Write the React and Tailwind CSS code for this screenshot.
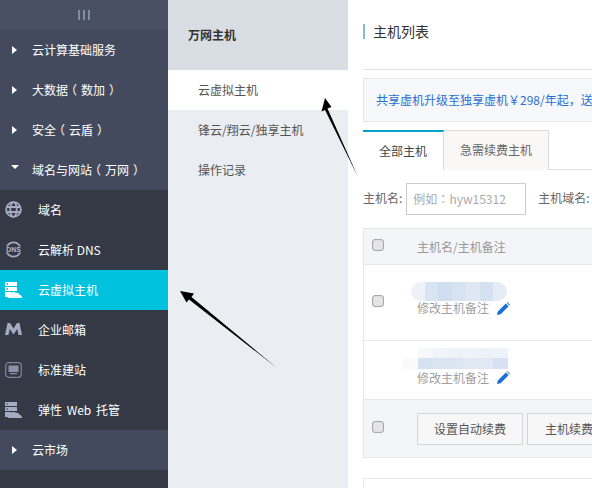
const font = { fontFamily: '"Noto Sans CJK SC","Liberation Sans",sans-serif' };

const Caret = ({ down }) =>
  down ? (
    <svg width="8" height="6" viewBox="0 0 8 6" className="mt-[-6px]"><path d="M0 1h8L4 5z" fill="#fff" /></svg>
  ) : (
    <svg width="5" height="8" viewBox="0 0 5 8" className="ml-[1px]"><path d="M0 0l5 4-5 4z" fill="#fff" /></svg>
  );

const Open = () => <span className="inline-block w-3 -translate-x-[3px]">（</span>;
const Close = () => <span className="inline-block w-3 translate-x-[5px]">）</span>;

const Top = ({ label, inner, down }) => (
  <div className="h-10 flex items-center bg-[#434a5e] text-white text-xs">
    <div className="w-8 pl-[11px] flex items-center"><Caret down={down} /></div>
    <span>{label}{inner && <><Open /><span className="inline-block translate-x-[1px]">{inner}</span><Close /></>}</span>
  </div>
);

const Globe = () => (
  <svg width="17" height="17" viewBox="0 0 17 17" fill="none" stroke="#a3acc0" strokeWidth="1.800" className="-mt-[2px]">
    <circle cx="8.5" cy="8.5" r="7.400" /><ellipse cx="8.5" cy="8.5" rx="3.200" ry="7.400" /><path d="M1.500 6h14M1.500 11h14" />
  </svg>
);
const Dns = () => (
  <svg width="17" height="17" viewBox="0 0 17 17" fill="none" className="-mt-[1px]">
    <circle cx="8.5" cy="8.5" r="7.200" stroke="#a3acc0" strokeWidth="1.800" />
    <rect x="0" y="5.500" width="17" height="6" fill="#353945" />
    <text x="8.5" y="11" textAnchor="middle" fontSize="6.800" fontWeight="700" fill="#b4bccd" fontFamily="Liberation Sans">DNS</text>
  </svg>
);
const ServerCloud = ({ c = "#a3acc0" }) => (
  <svg width="17" height="16" viewBox="0 0 17 16">
    <rect x="0" y="0" width="12" height="4" fill={c} /><rect x="0" y="5" width="12" height="4" fill={c} /><rect x="0" y="10" width="6" height="5" fill={c} />
    <path d="M4 16c-2 0 -2-3 .5-3.400C5 10 9 9 11 10.800c2.500-.3 3.500 1.200 3.500 2C16 13 17 14 17 16z" fill={c} />
    <rect x="1.500" y="1.500" width="1.500" height="1" fill="#353945" /><rect x="1.500" y="6.500" width="1.500" height="1" fill="#353945" />
  </svg>
);
const Mail = () => (
  <svg width="17" height="12" viewBox="0 0 17 12" className="-mt-[2px]"><path d="M0 12L2.500 0h2.500l3.500 5.500L12 0h2.500L17 12h-3.500l-1.200-6-3.800 5.500L4.700 6l-1.200 6z" fill="#a3acc0" /></svg>
);
const Site = () => (
  <svg width="17" height="16" viewBox="0 0 17 16" fill="none" className="-mt-[1px]">
    <rect x="0.700" y="0.700" width="15.600" height="14.600" rx="3" stroke="#7c869e" strokeWidth="1.200" />
    <rect x="3.500" y="3.500" width="10" height="6.500" fill="#8a93a8" /><rect x="5" y="11" width="7" height="1.200" fill="#8a93a8" />
  </svg>
);

const Sub = ({ icon, label, active, wide }) => (
  <div className={`h-10 flex items-center text-xs text-white ${active ? "bg-[#00c1de]" : ""}`}>
    <div className="w-[38px] pl-[5px] flex items-center">{icon}</div>
    <span className={wide ? "[word-spacing:2px]" : ""}>{label}</span>
  </div>
);

const Check = () => <div className="w-[12px] h-[12px] -mt-[4px] rounded-[3px] border border-[#a9a9a9] bg-[#e6e6e6] shadow-[inset_0_0_1px_#999]" />;

const Pencil = () => (
  <svg width="13" height="13" viewBox="0 0 13 13"><path d="M0 13l.8-3.600L8.800 1.400l2.800 2.800L3.600 12.200zM9.600.6l.6-.6 2.800 2.800-.6.6z" fill="#1a6fd6" /></svg>
);

const Note = () => (
  <div className="flex items-center h-[16px] text-xs text-[#a0a0a0]">
    <span>修改主机备注</span><span className="ml-2"><Pencil /></span>
  </div>
);

const cells1 = ["#eef2f8", "#d9e4f2", "#cfdef0", "#d8e3f1", "#dfe7f3", "#d5e1f0", "#e6ecf5"];
const cells2top = ["#ffffff", "#f6f8fc", "#f1f4fa", "#eef2f9", "#eff3fa", "#edf1f8", "#eef2f9"];
const cells2bot = ["#fafafa", "#d6e2f1", "#dbe5f2", "#dbe5f2", "#dfe8f3", "#e2e9f4", "#d6e2f1"];

export default function App() {
  return (
    <div style={font} className="relative w-[592px] h-[488px] overflow-hidden flex bg-white">
      <aside className="w-[168px] shrink-0 bg-[#353945]">
        <div className="h-[30px] bg-[#4a5064] flex items-center justify-center gap-[3px]">
          <i className="w-[2px] h-[10px] bg-[#7f8ea8]" /><i className="w-[2px] h-[10px] bg-[#7f8ea8]" /><i className="w-[2px] h-[10px] bg-[#7f8ea8]" />
        </div>
        <Top label="云计算基础服务" />
        <Top label="大数据" inner="数加" />
        <Top label="安全" inner="云盾" />
        <Top label="域名与网站" inner="万网" down />
        <Sub icon={<Globe />} label="域名" />
        <Sub icon={<Dns />} label="云解析 DNS" />
        <Sub icon={<ServerCloud c="#fff" />} label="云虚拟主机" active />
        <Sub icon={<Mail />} label="企业邮箱" />
        <Sub icon={<Site />} label="标准建站" />
        <Sub icon={<ServerCloud />} label="弹性 Web 托管" wide />
        <Top label="云市场" />
      </aside>

      <nav className="w-[180px] shrink-0 bg-[#eaedf1] text-xs text-[#555]">
        <div className="h-[70px] bg-[#d9dee4] flex items-center pl-5 font-bold text-[#333]">万网主机</div>
        <div className="h-10 bg-white flex items-center pl-[30px]">云虚拟主机</div>
        <div className="h-10 flex items-center pl-[30px]">锋云/翔云/独享主机</div>
        <div className="h-10 flex items-center pl-[30px]">操作记录</div>
      </nav>

      <main className="flex-1 min-w-0 pl-[15px]">
        <div className="w-[500px]">
          <div className="h-[70px] border-b border-[#e1e1e1] pt-6">
            <div className="h-[15px] border-l-2 border-[#88b7e0] pl-2 flex items-center text-sm text-[#333] leading-none"><span className="-mt-[2px]">主机列表</span></div>
          </div>
          <div className="mt-2 h-[44px] border border-[#e4e8ee] bg-[#f6f8fb] flex items-center pl-3 text-xs text-[#2a6fd0] whitespace-nowrap">
            共享虚机升级至独享虚机￥298/年起，送
          </div>
          <div className="mt-2 h-10 border-b border-[#ddd] flex text-xs">
            <div className="w-[81px] h-10 border-t-2 border-[#00a2ca] border-r border-r-[#ddd] bg-white flex items-center justify-center text-[#444] pb-[1px]">全部主机</div>
            <div className="w-[105px] h-10 border-t border-r border-[#ddd] bg-[#faf8f6] flex items-center justify-center text-[#666] pb-[1px]">急需续费主机</div>
          </div>
          <div className="mt-[13px] h-8 flex items-center text-xs text-[#666]">
            <span className="-mt-[2px]">主机名:</span>
            <div className="ml-[4px] w-[120px] h-8 border border-[#ccc] flex items-center pl-[6px] text-[#aaa]">
              例如<span className="font-['Noto_Sans_CJK_TC']">：</span>hyw15312
            </div>
            <span className="ml-[12px] -mt-[2px]">主机域名:</span>
          </div>
          <div className="mt-[13px] border border-[#e6e8ec]">
            <div className="h-[36px] bg-[#f3f5f8] border-b border-[#e6e8ec] flex items-center pl-[8px] text-xs text-[#999]">
              <Check /><span className="ml-[33px]">主机名/主机备注</span>
            </div>
            <div className="h-[76px] border-b border-[#e6e8ec] flex items-center pl-[8px]">
              <Check />
              <div className="ml-[33px] -mt-[7px]">
                <div className="w-[96px] h-[19px] -ml-[6px] rounded-full overflow-hidden flex blur-[0.5px]">
                  {cells1.map((c, i) => <div key={i} className="flex-1" style={{ background: c }} />)}
                </div>
                <div className="mt-[-1px]"><Note /></div>
              </div>
            </div>
            <div className="h-[59px] border-b border-[#e6e8ec] flex items-center pl-[53px]">
              <div className="-mt-[7px]">
                <div className="w-[105px] h-[21px] -ml-[14px] flex flex-col blur-[0.5px]">
                  <div className="flex-1 flex">{cells2top.map((c, i) => <div key={i} className="flex-1" style={{ background: c }} />)}</div>
                  <div className="flex-1 flex">{cells2bot.map((c, i) => <div key={i} className="flex-1" style={{ background: c }} />)}</div>
                </div>
                <div className="mt-[1px]"><Note /></div>
              </div>
            </div>
            <div className="h-[57px] bg-[#f3f5f8] flex items-center pl-[8px] text-xs text-[#555]">
              <Check />
              <div className="ml-[33px] w-[106px] h-8 border border-[#d5d5d5] bg-[#f7f7f7] flex items-center justify-center">设置自动续费</div>
              <div className="ml-[4px] w-[90px] h-8 border border-[#d5d5d5] bg-[#f7f7f7] flex items-center pl-[17px]">主机续费</div>
            </div>
          </div>
          <div className="mt-[20px] h-20 border border-[#e6e8ec]" />
        </div>
      </main>

      <svg className="absolute inset-0 pointer-events-none" width="592" height="488" viewBox="0 0 592 488">
        <path d="M180 291L194 293.500L191.500 297L277 368L189 299.500L186.500 302.500Z" fill="#000" />
        <path d="M325 98L331.500 107L327.500 108.500L358 177L325 110L321.500 111.500Z" fill="#000" />
      </svg>
    </div>
  );
}
